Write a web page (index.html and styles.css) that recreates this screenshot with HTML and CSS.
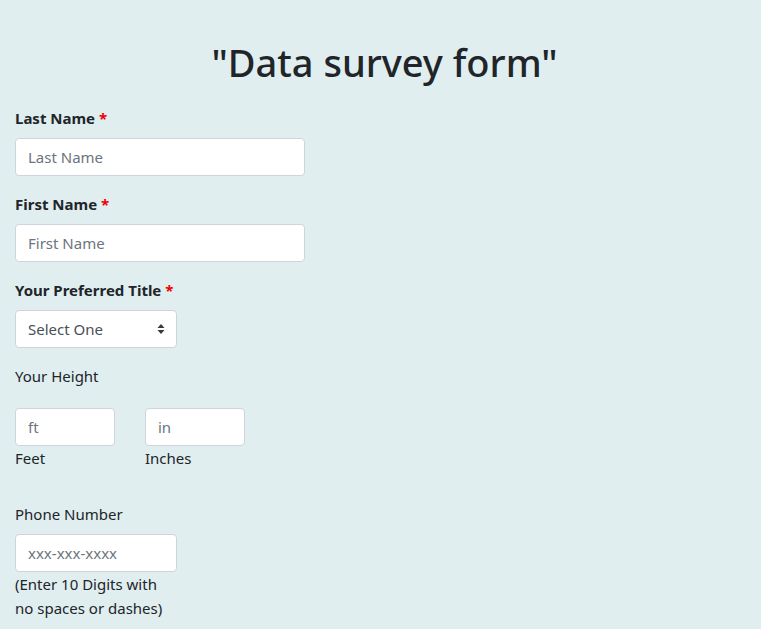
FILE: index.html
```html
<!DOCTYPE html>
<html lang="en">
<head>
<meta charset="utf-8">
<title>Data survey form</title>
<link rel="stylesheet" href="styles.css">
</head>
<body>
<main class="page">
  <h1 class="title">"Data survey form"</h1>
  <form class="form">
    <div class="group">
      <label class="label bold" for="last">Last Name <span class="req">*</span></label>
      <input class="input wide" id="last" type="text" placeholder="Last Name">
    </div>
    <div class="group">
      <label class="label bold" for="first">First Name <span class="req">*</span></label>
      <input class="input wide" id="first" type="text" placeholder="First Name">
    </div>
    <div class="group">
      <label class="label bold" for="title">Your Preferred Title <span class="req">*</span></label>
      <div class="select-wrap">
        <select class="input select" id="title">
          <option>Select One</option>
        </select>
        <svg class="arrows" width="8" height="12" viewBox="0 0 8 12"><path d="M4 1 L7.5 5 H0.5 Z M4 11 L7.5 7 H0.5 Z" fill="#343a40"/></svg>
      </div>
    </div>
    <div class="height-block">
      <div class="label plain">Your Height</div>
      <div class="height-row">
        <div class="hcol">
          <input class="input small" type="text" placeholder="ft">
          <div class="sub">Feet</div>
        </div>
        <div class="hcol">
          <input class="input small" type="text" placeholder="in">
          <div class="sub">Inches</div>
        </div>
      </div>
    </div>
    <div class="phone">
      <label class="label plain" for="phone">Phone Number</label>
      <input class="input medium" id="phone" type="text" placeholder="xxx-xxx-xxxx">
      <div class="note">(Enter 10 Digits with no spaces or dashes)</div>
    </div>
  </form>
</main>
</body>
</html>
```
FILE: styles.css
```css
* { box-sizing: border-box; }
html, body { margin: 0; padding: 0; }
body {
  background: #e0eef0;
  color: #212529;
  font-family: "Noto Sans", "Open Sans", sans-serif;
  font-size: 15px;
  line-height: 24px;
}
.page { padding: 38px 15px 0; }
.title {
  margin: 0 0 20px;
  padding-left: 8px;
  text-align: center;
  font-size: 38px;
  line-height: 48px;
  font-weight: 500;
}
.form { display: flex; flex-direction: column; }
.group { display: flex; flex-direction: column; margin-bottom: 16px; }
.label { display: block; margin-bottom: 8px; }
.bold { font-weight: 700; }
.plain { font-weight: 400; }
.req { color: #e00; }
.input {
  display: block;
  height: 38px;
  padding: 6px 12px;
  border: 1px solid #ced4da;
  border-radius: 4px;
  background: #fff;
  font: inherit;
  color: #495057;
}
.input::placeholder { color: #6c757d; }
.wide { width: 290px; }
.medium { width: 162px; }
.small { width: 100px; }
.select-wrap { position: relative; width: 162px; }
.select { width: 162px; appearance: none; -webkit-appearance: none; }
.arrows { position: absolute; right: 12px; top: 13px; pointer-events: none; }
.height-block { display: flex; flex-direction: column; margin-bottom: 32px; }
.height-block .label { margin-bottom: 20px; }
.height-row { display: flex; gap: 30px; }
.hcol { display: flex; flex-direction: column; }
.phone { display: flex; flex-direction: column; }
.note { width: 162px; }
```
